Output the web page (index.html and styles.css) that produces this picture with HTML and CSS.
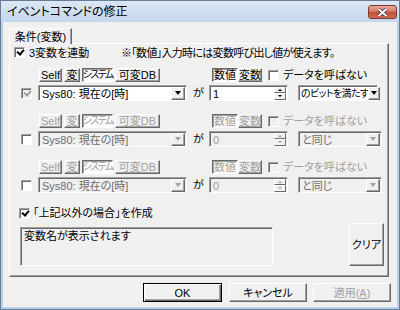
FILE: index.html
```html
<!DOCTYPE html>
<html lang="ja">
<head>
    <meta charset="UTF-8">
    <title>イベントコマンドの修正</title>
    <link rel="stylesheet" href="styles.css">
</head>
<body>
<div class="window">
    <div class="titlebar">
        <span class="title">イベントコマンドの修正</span>
        <span class="close">
            <svg width="11" height="9" viewBox="0 0 11 9">
                <path d="M1.5 1 L9.5 8 M9.5 1 L1.5 8" stroke="#4a2a26" stroke-width="3.4" fill="none"/>
                <path d="M1.5 1 L9.5 8 M9.5 1 L1.5 8" stroke="#fff" stroke-width="2" fill="none"/>
            </svg>
        </span>
    </div>

    <div class="client">
        <div class="tabs"><span class="tab">条件(変数)</span></div>

        <div class="page">
            <div class="row1">
                <label class="check first"><span class="box checked"></span>3変数を連動</label>
                <span class="note">※「数値」入力時には変数呼び出し値が使えます。</span>
            </div>

            <!-- 1st condition -->
            <div class="group">
                <div class="g-top">
                    <div class="seg-var">
                        <span class="btn w-self">Self</span>
                        <span class="btn w-hen">変</span>
                        <span class="btn w-sys on narrow">システム</span>
                        <span class="btn w-db">可変DB</span>
                    </div>
                    <div class="seg-val">
                        <span class="btn w-num on">数値</span><span class="btn w-vr">変数</span>
                    </div>
                    <label class="check small"><span class="box"></span>データを呼ばない</label>
                </div>
                <div class="g-main">
                    <span class="box checked dim"></span>
                    <div class="combo var-combo"><span class="val">Sys80: 現在の[時]</span><span class="drop"></span></div>
                    <span class="ga">が</span>
                    <div class="spin"><span class="val">1</span><span class="arrows"><i class="up"></i><i class="down"></i></span></div>
                    <div class="combo op-combo short"><span class="val tight">のビットを満たす</span><span class="drop"></span></div>
                </div>
            </div>

            <!-- 2nd condition -->
            <div class="group off">
                <div class="g-top">
                    <div class="seg-var">
                        <span class="btn w-self">Self</span>
                        <span class="btn w-hen">変</span>
                        <span class="btn w-sys on narrow">システム</span>
                        <span class="btn w-db">可変DB</span>
                    </div>
                    <div class="seg-val">
                        <span class="btn w-num on">数値</span><span class="btn w-vr">変数</span>
                    </div>
                    <label class="check small"><span class="box"></span>データを呼ばない</label>
                </div>
                <div class="g-main">
                    <span class="box"></span>
                    <div class="combo var-combo"><span class="val">Sys80: 現在の[時]</span><span class="drop"></span></div>
                    <span class="ga">が</span>
                    <div class="spin"><span class="val">0</span><span class="arrows"><i class="up"></i><i class="down"></i></span></div>
                    <div class="combo op-combo"><span class="val">と同じ</span><span class="drop"></span></div>
                </div>
            </div>

            <!-- 3rd condition -->
            <div class="group off">
                <div class="g-top">
                    <div class="seg-var">
                        <span class="btn w-self">Self</span>
                        <span class="btn w-hen">変</span>
                        <span class="btn w-sys on narrow">システム</span>
                        <span class="btn w-db">可変DB</span>
                    </div>
                    <div class="seg-val">
                        <span class="btn w-num on">数値</span><span class="btn w-vr">変数</span>
                    </div>
                    <label class="check small"><span class="box"></span>データを呼ばない</label>
                </div>
                <div class="g-main">
                    <span class="box"></span>
                    <div class="combo var-combo"><span class="val">Sys80: 現在の[時]</span><span class="drop"></span></div>
                    <span class="ga">が</span>
                    <div class="spin"><span class="val">0</span><span class="arrows"><i class="up"></i><i class="down"></i></span></div>
                    <div class="combo op-combo"><span class="val">と同じ</span><span class="drop"></span></div>
                </div>
            </div>

            <div class="else-row">
                <label class="check"><span class="box checked"></span>「上記以外の場合」を作成</label>
            </div>

            <div class="name-row">
                <div class="name-box">変数名が表示されます</div>
                <span class="btn clear-btn">クリア</span>
            </div>
        </div>

        <div class="footer">
            <span class="btn foot-btn default">OK</span>
            <span class="btn foot-btn">キャンセル</span>
            <span class="btn foot-btn disabled">適用(<u>A</u>)</span>
        </div>
    </div>
</div>
</body>
</html>
```

FILE: styles.css
```css
* {
    box-sizing: border-box;
}

body {
    margin: 0;
    font-family: "Liberation Sans", "Noto Sans CJK JP", sans-serif;
    font-size: 11px;
    line-height: 12px;
    font-feature-settings: "palt";
    color: #000;
}

.window {
    width: 400px;
    height: 310px;
    border: 1px solid #6a7d96;
    padding: 0 2px 2px 2px;
    display: flex;
    flex-direction: column;
    background: linear-gradient(#dce7f4, #c4d6ec 21px, #b9cee8 21px, #b9cee8);
}


.titlebar {
    height: 21px;
    flex-shrink: 0;
    display: flex;
    align-items: center;
    justify-content: space-between;
    padding: 0 0 0 4px;
}

.title {
    font-size: 12px;
    line-height: 14px;
}

.close {
    width: 29px;
    height: 14px;
    margin-top: 1px;
    border: 1px solid #7a3a32;
    border-radius: 3px;
    background: linear-gradient(#e8a799, #d47a68 45%, #c4503c 55%, #cf6b55);
    display: flex;
    align-items: center;
    justify-content: center;
}


.client {
    flex: 1;
    background: #f0f0f0;
    padding: 6px 0 0 6px;
    display: flex;
    flex-direction: column;
}

.tabs {
    height: 15px;
    display: flex;
    position: relative;
    z-index: 1;
}

.tab {
    width: 63px;
    height: 16px;
    border: 1px solid #fff;
    border-right-color: #696969;
    border-bottom: none;
    box-shadow: inset -1px 0 #a0a0a0;
    background: #f0f0f0;
    display: flex;
    align-items: center;
    justify-content: center;
    padding-top: 1px;
}

.page {
    width: 380px;
    height: 234px;
    border: 1px solid;
    border-color: #fff #696969 #696969 #fff;
    box-shadow: inset -1px -1px #a0a0a0;
    display: flex;
    flex-direction: column;
}


/* check boxes */
.check {
    display: flex;
    align-items: center;
    gap: 4px;
    white-space: nowrap;
}

.box {
    width: 11px;
    height: 11px;
    flex-shrink: 0;
    border: 1px solid;
    border-color: #a0a0a0 #fff #fff #a0a0a0;
    box-shadow: inset 1px 1px #696969;
    background: #fff;
    display: flex;
    align-items: center;
    justify-content: center;
}

.box.checked::after {
    content: "";
    width: 5px;
    height: 3px;
    margin: -2px 0 0 1px;
    border-left: 2px solid #000;
    border-bottom: 2px solid #000;
    transform: rotate(-50deg);
}

.box.dim {
    background: #f0f0f0;
}

.box.dim::after {
    border-color: #a0a0a0;
}


.row1 {
    display: flex;
    align-items: center;
    height: 11px;
    margin-top: 3px;
    padding-left: 4px;
}

.row1 .check {
    width: 107px;
}

.note {
    letter-spacing: -0.7px;
}


/* buttons */
.btn {
    height: 14px;
    background: #f0f0f0;
    border: 1px solid;
    border-color: #fff #696969 #696969 #fff;
    box-shadow: inset -1px -1px #a0a0a0;
    display: flex;
    align-items: center;
    justify-content: center;
    white-space: nowrap;
}

.btn.on {
    border-color: #696969 #fff #fff #696969;
    box-shadow: inset 1px 1px #a0a0a0;
    background: #fbfbfb;
}

.narrow {
    letter-spacing: -1.6px;
    font-size: 10px;
}


/* condition groups */
.group {
    margin-top: 10px;
    height: 33px;
    display: flex;
    flex-direction: column;
    gap: 3px;
}

.group + .group {
    margin-top: 13px;
}

.g-top {
    display: flex;
    align-items: center;
    height: 14px;
    padding-left: 29px;
}

.seg-var {
    display: flex;
    gap: 2px;
}

.w-self { width: 23px; }
.w-hen { width: 16px; }
.w-sys { width: 31px; }
.w-db { width: 45px; }
.w-num { width: 26px; }
.w-vr { width: 24px; }

.seg-val {
    display: flex;
    margin-left: 52px;
}

.check.small {
    margin-left: 6px;
}

.g-main {
    display: flex;
    align-items: center;
    height: 16px;
    padding-left: 11px;
}

.combo,
.spin {
    height: 16px;
    border: 1px solid;
    border-color: #a0a0a0 #fff #fff #a0a0a0;
    box-shadow: inset 1px 1px #696969;
    background: #fff;
    display: flex;
    align-items: center;
    padding: 1px 1px 0 3px;
}

.val {
    flex: 1;
    white-space: nowrap;
}

.tight {
    font-size: 10px;
    letter-spacing: -0.6px;
}

.var-combo {
    width: 149px;
    margin-left: 6px;
}

.drop {
    width: 14px;
    height: 13px;
    flex-shrink: 0;
    border: 1px solid;
    border-color: #fff #696969 #696969 #fff;
    box-shadow: inset -1px -1px #a0a0a0;
    background: #f0f0f0;
    display: flex;
    align-items: center;
    justify-content: center;
    margin-top: -1px;
}

.drop::after {
    content: "";
    border-left: 3.5px solid transparent;
    border-right: 3.5px solid transparent;
    border-top: 4px solid #000;
}

.ga {
    width: 16px;
    margin-left: 6px;
}

.spin {
    width: 79px;
    margin-left: 0;
}

.arrows {
    width: 12px;
    height: 13px;
    margin-top: -1px;
    display: flex;
    flex-direction: column;
}

.arrows i {
    flex: 1;
    border: 1px solid;
    border-color: #fff #696969 #696969 #fff;
    background: #f0f0f0;
    display: flex;
    align-items: center;
    justify-content: center;
}

.arrows .up::after {
    content: "";
    border-left: 2px solid transparent;
    border-right: 2px solid transparent;
    border-bottom: 2px solid #000;
}

.arrows .down::after {
    content: "";
    border-left: 2px solid transparent;
    border-right: 2px solid transparent;
    border-top: 2px solid #000;
}

.op-combo {
    width: 84px;
    margin-left: 10px;
}

.op-combo.short {
    width: 80px;
    padding-left: 2px;
}

.op-combo.short .drop {
    width: 12px;
}


/* disabled rows */
.off .g-top,
.off .g-main .combo,
.off .g-main .spin {
    color: #a0a0a0;
}

.off .g-main .combo {
    background: #f0f0f0;
    color: #6d6d6d;
}

.off .g-main .spin {
    background: #f0f0f0;
}

.off .g-top .box {
    background: #f0f0f0;
}

.off .drop::after,
.off .arrows i::after {
    border-top-color: #a0a0a0;
    border-bottom-color: #a0a0a0;
}


.else-row {
    display: flex;
    align-items: center;
    height: 12px;
    margin-top: 14px;
    padding-left: 9px;
}

.else-row .check {
    gap: 3px;
}

.name-row {
    display: flex;
    align-items: flex-end;
    margin-top: 4px;
    padding-left: 10px;
}

.name-box {
    width: 253px;
    height: 39px;
    border: 1px solid;
    border-color: #a0a0a0 #fff #fff #a0a0a0;
    box-shadow: inset 1px 1px #696969;
    padding: 2px 2px 0 3px;
    line-height: 13px;
}

.clear-btn {
    width: 35px;
    height: 43px;
    margin-left: 76px;
}


.footer {
    display: flex;
    gap: 6px;
    margin-top: 6px;
    padding-left: 134px;
}

.foot-btn {
    width: 78px;
    height: 19px;
}

.foot-btn.default {
    width: 79px;
    margin-right: 1px;
    border: 1px solid #000;
    box-shadow: inset 1px 1px #fff, inset -1px -1px #696969, inset -2px -2px #a0a0a0;
}

.foot-btn.disabled {
    color: #a0a0a0;
}
```
